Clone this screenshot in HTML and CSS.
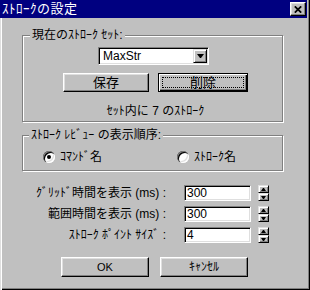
FILE: index.html
```html
<!DOCTYPE html>
<html lang="ja">
<head>
<meta charset="utf-8">
<link rel="stylesheet" href="styles.css">
</head>
<body>
<div class="window">
  <div class="titlebar">
    <span class="title">ｽﾄﾛｰｸの設定</span>
    <span class="close"><svg width="8" height="7" viewBox="0 0 8 7"><path d="M0.8 0.3L7.2 6.7M7.2 0.3L0.8 6.7" stroke="#000" stroke-width="1.7" fill="none"/></svg></span>
  </div>
  <div class="group g1">
    <span class="legend">現在のｽﾄﾛｰｸ ｾｯﾄ:</span>
    <div class="combo">
      <span class="combo-text">MaxStr</span>
      <span class="combo-btn"><span class="tri-down"></span></span>
    </div>
    <div class="btnrow">
      <div class="btn save jp">保存</div>
      <div class="btn delete jp"><span class="focus">削除</span></div>
    </div>
    <div class="info">ｾｯﾄ内に 7 のｽﾄﾛｰｸ</div>
  </div>
  <div class="group g2">
    <span class="legend l2">ｽﾄﾛｰｸ ﾚﾋﾞｭｰ の表示順序:</span>
    <div class="radios">
      <span class="radio-item r1"><span class="radio checked"></span>ｺﾏﾝﾄﾞ名</span>
      <span class="radio-item r2"><span class="radio"></span>ｽﾄﾛｰｸ名</span>
    </div>
  </div>
  <div class="fields">
    <div class="row">
      <span class="label">ｸﾞﾘｯﾄﾞ時間を表示 (ms) :</span>
      <span class="edit">300</span>
      <span class="spin"><span class="spin-btn up"></span><span class="spin-btn down"></span></span>
    </div>
    <div class="row">
      <span class="label">範囲時間を表示 (ms) :</span>
      <span class="edit">300</span>
      <span class="spin"><span class="spin-btn up"></span><span class="spin-btn down"></span></span>
    </div>
    <div class="row">
      <span class="label">ｽﾄﾛｰｸ ﾎﾟｲﾝﾄ ｻｲｽﾞ :</span>
      <span class="edit">4</span>
      <span class="spin"><span class="spin-btn up"></span><span class="spin-btn down"></span></span>
    </div>
  </div>
  <div class="actions">
    <div class="btn act ok">OK</div>
    <div class="btn act">ｷｬﾝｾﾙ</div>
  </div>
</div>
</body>
</html>
```
FILE: styles.css
```css
html, body {
  margin: 0;
  background: #c0c0c0;
}
body {
  font: 12px "Liberation Sans", "Noto Sans CJK JP", sans-serif;
  color: #000;
}
.window {
  width: 310px;
  height: 290px;
  box-sizing: border-box;
  background: #c0c0c0;
  box-shadow: inset 1px 0 #dfdfdf, inset 2px 0 #fff, inset -1px -1px #000, inset -2px -2px #808080;
  display: flow-root;
}
.titlebar {
  width: 307px;
  height: 18px;
  background: #000080;
  color: #fff;
  display: flex;
  align-items: center;
  justify-content: space-between;
}
.title {
  padding-left: 2px;
  font-size: 13px;
  line-height: 18px;
  letter-spacing: 0.5px;
}
.close {
  width: 16px;
  height: 14px;
  box-sizing: border-box;
  margin-right: 1px;
  background: #c0c0c0;
  border: 1px solid;
  border-color: #fff #000 #000 #fff;
  box-shadow: inset -1px -1px #808080, inset 1px 1px #dfdfdf;
  display: flex;
  align-items: center;
  justify-content: center;
}
.close svg { display: block; }
.group {
  position: relative;
  box-sizing: border-box;
  margin-left: 22px;
  width: 261px;
  border: 1px solid #808080;
  box-shadow: inset 1px 1px #fff, 1px 1px #fff;
}
.g1 {
  margin-top: 17px;
  height: 87px;
  display: flow-root;
}
.g2 {
  margin-top: 13px;
  height: 36px;
}
.legend {
  position: absolute;
  top: -8px;
  left: 7px;
  padding: 0 2px;
  background: #c0c0c0;
  line-height: 14px;
  white-space: nowrap;
}
.l2 { left: 6px; }
.combo {
  margin: 11px 0 0 75px;
  width: 111px;
  height: 18px;
  box-sizing: border-box;
  background: #fff;
  border: 1px solid;
  border-color: #808080 #fff #fff #808080;
  box-shadow: inset 1px 1px #000, inset -1px -1px #dfdfdf;
  display: flex;
  align-items: center;
}
.combo-text {
  padding-left: 4px;
  line-height: 14px;
}
.combo-btn {
  margin-left: auto;
  margin-right: 1px;
  width: 14px;
  height: 14px;
  box-sizing: border-box;
  background: #c0c0c0;
  border: 1px solid;
  border-color: #dfdfdf #000 #000 #dfdfdf;
  box-shadow: inset 1px 1px #fff, inset -1px -1px #808080;
  display: flex;
  align-items: center;
  justify-content: center;
}
.tri-down {
  width: 1px;
  height: 0;
  border-left: 3px solid transparent;
  border-right: 3px solid transparent;
  border-top: 4px solid #000;
}
.btnrow {
  display: flex;
  gap: 9px;
  margin: 8px 0 0 40px;
}
.btn {
  height: 19px;
  box-sizing: border-box;
  background: #c0c0c0;
  border: 1px solid;
  border-color: #fff #000 #000 #fff;
  box-shadow: inset -1px -1px #808080, inset 1px 1px #dfdfdf;
  display: flex;
  align-items: center;
  justify-content: center;
  line-height: 14px;
}
.jp { font-size: 13px; }
.ok { font-size: 11px; }
.save { width: 86px; }
.delete {
  width: 90px;
  border-color: #000;
  box-shadow: inset 1px 1px #fff, inset -1px -1px #000, inset -2px -2px #808080;
  padding: 3px;
  align-items: stretch;
}
.focus {
  flex: 1;
  border: 1px dotted #000;
  display: flex;
  align-items: center;
  justify-content: center;
}
.info {
  margin-top: 12px;
  padding-left: 6px;
  text-align: center;
  line-height: 14px;
}
.radios {
  display: flex;
  align-items: center;
  padding-top: 14px;
  line-height: 14px;
}
.radio-item {
  display: flex;
  align-items: center;
  gap: 5px;
}
.r1 { margin-left: 20px; }
.r2 { margin-left: 75px; }
.radio {
  width: 12px;
  height: 12px;
  border-radius: 50%;
  background: #fff;
  box-shadow: inset 1px 1px #808080, inset 2px 2px #000, inset -1px -1px #fff, inset -2px -2px #dfdfdf;
  display: flex;
  align-items: center;
  justify-content: center;
}
.radio.checked::after {
  content: "";
  width: 4px;
  height: 4px;
  border-radius: 50%;
  background: #000;
}
.fields {
  margin-top: 14px;
  display: flex;
  flex-direction: column;
  gap: 5px;
}
.row {
  display: flex;
  align-items: center;
  height: 16px;
}
.label {
  margin-left: 22px;
  width: 144px;
  text-align: right;
  white-space: nowrap;
  line-height: 14px;
}
.edit {
  margin-left: 18px;
  width: 67px;
  height: 16px;
  box-sizing: border-box;
  background: #fff;
  border: 1px solid;
  border-color: #808080 #fff #fff #808080;
  box-shadow: inset 1px 1px #000, inset -1px -1px #dfdfdf;
  padding-left: 2px;
  line-height: 14px;
}
.spin {
  margin-left: 7px;
  width: 11px;
  height: 16px;
  display: flex;
  flex-direction: column;
}
.spin-btn {
  flex: 1;
  box-sizing: border-box;
  background: #c0c0c0;
  border: 1px solid;
  border-color: #dfdfdf #000 #000 #dfdfdf;
  box-shadow: inset 1px 1px #fff, inset -1px -1px #808080;
  display: flex;
  align-items: center;
  justify-content: center;
}
.spin-btn::after {
  content: "";
  width: 1px;
  height: 0;
  border-left: 2px solid transparent;
  border-right: 2px solid transparent;
}
.up::after { border-bottom: 3px solid #000; }
.down::after { border-top: 3px solid #000; }
.actions {
  display: flex;
  gap: 11px;
  margin: 14px 0 0 61px;
}
.act {
  width: 88px;
  height: 20px;
}
```
